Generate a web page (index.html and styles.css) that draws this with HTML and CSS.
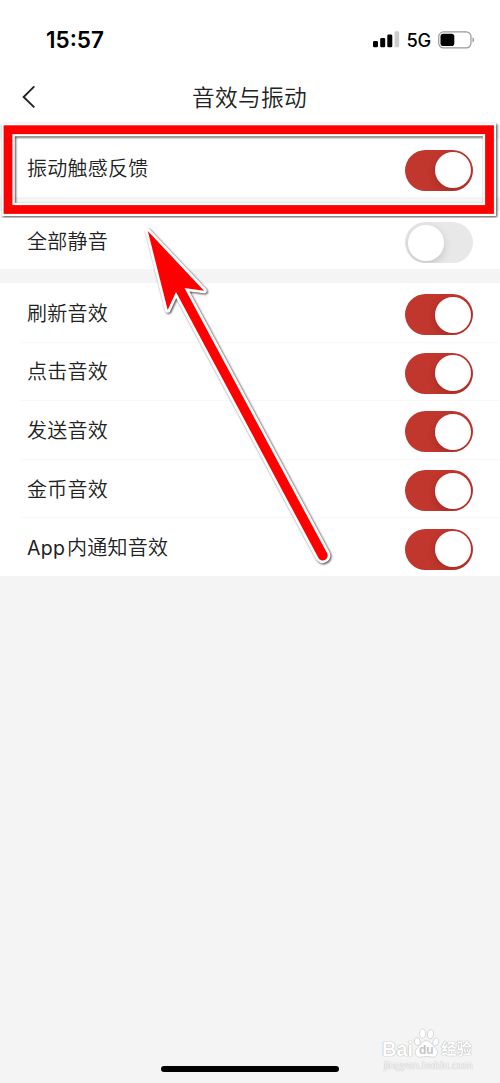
FILE: index.html
```html
<!DOCTYPE html>
<html lang="zh-CN">
<head>
<meta charset="utf-8">
<title>音效与振动</title>
<link rel="stylesheet" href="styles.css">
</head>
<body>
<div class="screen">
  <header class="top">
    <div class="status">
      <span class="clock">15:57</span>
      <div class="status-right">
        <svg class="signal" width="27" height="17" viewBox="0 0 27 17"><g fill="#000"><rect x="0" y="10" width="5" height="6.3" rx="1.4"/><rect x="7.2" y="7" width="5" height="9.3" rx="1.4"/><rect x="14.3" y="3.5" width="5" height="12.8" rx="1.4"/></g><rect x="21.6" y=".3" width="4.6" height="16" rx="1.4" fill="#ccc"/></svg>
        <span class="network">5G</span>
        <svg class="battery" width="37" height="18" viewBox="0 0 37 18"><rect x=".7" y=".9" width="32.3" height="16" rx="4.8" fill="#fff" stroke="#999" stroke-width="1.2"/><rect x="2.5" y="2.7" width="13.8" height="12.4" rx="2.8"/><path d="M34.5 6.3Q36.2 7 36.2 8.9T34.5 11.5Z" fill="#999"/></svg>
      </div>
    </div>
    <div class="navbar">
      <svg class="back" width="14" height="24" viewBox="0 0 14 24"><path d="M12.3 1.4L1.6 12L12.3 22.4" fill="none" stroke="#222" stroke-width="1.9"/></svg>
      <h1 class="title">音效与振动</h1>
    </div>
  </header>
  <section class="group">
    <div class="row"><span class="label">振动触感反馈</span><span class="switch on"></span></div>
  </section>
  <section class="group">
    <div class="row"><span class="label">全部静音</span><span class="switch"></span></div>
  </section>
  <section class="group">
    <div class="row"><span class="label">刷新音效</span><span class="switch on"></span></div>
    <div class="row"><span class="label">点击音效</span><span class="switch on"></span></div>
    <div class="row"><span class="label">发送音效</span><span class="switch on"></span></div>
    <div class="row"><span class="label">金币音效</span><span class="switch on"></span></div>
    <div class="row"><span class="label"><span class="latin">App</span>内通知音效</span><span class="switch on"></span></div>
  </section>

  <svg class="annotation" width="500" height="1083" viewBox="0 0 500 1083">
    <defs><filter id="shadow" x="-10%" y="-10%" width="120%" height="120%" color-interpolation-filters="sRGB"><feDropShadow dx="1" dy="1" stdDeviation="1.1" flood-color="#000" flood-opacity=".75"/></filter></defs>
    <g filter="url(#shadow)">
      <rect x="8.2" y="129.7" width="481.3" height="79.8" fill="none" stroke="#fff" stroke-width="13.2"/>
      <rect x="8" y="129.7" width="481.5" height="79.8" fill="none" stroke="#f00" stroke-width="8.8"/>
    </g>
    <path filter="url(#shadow)" d="M147.8 231L204 290.7L184.5 288L327 553A4.6 4.6 0 0 1 318.5 558L176 292L167.7 310Z" fill="#f00" stroke="#fff" stroke-width="5.4" stroke-linejoin="round" paint-order="stroke"/>
  </svg>

  <div class="watermark">
    <div class="brand">
      <span>Bai</span>
      <svg class="paw" width="27" height="31" viewBox="0 0 27 31"><g fill="#fff" stroke="#d4d4d4" stroke-width=".9"><ellipse cx="4.3" cy="13.5" rx="3" ry="4" transform="rotate(-15 4.3 13.5)"/><ellipse cx="9.6" cy="5.6" rx="3.1" ry="4.5"/><ellipse cx="17.5" cy="6.2" rx="3.1" ry="4.5" transform="rotate(12 17.5 6.2)"/><ellipse cx="22.7" cy="14" rx="3" ry="4" transform="rotate(15 22.7 14)"/><path d="M13.4 12.7C17.5 12.7 18.8 17 22 19.5C26.5 23.4 24.5 29.5 19.5 29.2C15.2 28.3 11.7 28.3 7.6 29.2C2.1 29.7.3 23.5 4.5 19.8C8 16.8 9.3 12.7 13.4 12.7Z"/></g><text class="du" x="13.3" y="25.7" text-anchor="middle">du</text></svg>
      <span class="cjk">经验</span>
    </div>
    <div class="site">jingyan.baidu.com</div>
  </div>
  <div class="home"></div>
</div>
</body>
</html>
```
FILE: styles.css
```css
* { box-sizing: border-box; }
body { margin: 0; }
.screen {
  position: relative;
  width: 500px;
  height: 1083px;
  overflow: hidden;
  background: #f4f4f4;
  color: #222;
  font-family: Roboto, "Noto Sans CJK SC", sans-serif;
}
.top { height: 125px; background: #fff; }
.status {
  height: 72px;
  padding: 7px 25px 0 46px;
  display: flex;
  align-items: center;
  justify-content: space-between;
  color: #000;
  font-family: Inter, sans-serif;
}
.clock { font-size: 22.5px; font-weight: 600; }
.status-right { display: flex; align-items: center; }
.network { margin: 0 7px 0 6.5px; font-size: 18.3px; font-weight: 500; letter-spacing: -0.2px; }
.signal, .battery { display: block; }
.navbar {
  height: 50px;
  padding-left: 22px;
  display: grid;
  grid-template-columns: 14px 1fr 37px;
  align-items: center;
}
.title {
  margin: 0;
  text-align: center;
  font-size: 22.7px;
  font-weight: 350;
  line-height: 34px;
  letter-spacing: .3px;
  font-family: "Noto Sans CJK SC", sans-serif;
}
.group { margin-top: 13.6px; background: #fff; }
.row {
  height: 58.6px;
  margin-left: 21px;
  padding: 5px 27px 0 6px;
  display: flex;
  align-items: center;
  justify-content: space-between;
}
.row + .row { padding-top: 4px; border-top: 1px solid #f8f8f8; }
.label {
  padding-bottom: 4px;
  font-size: 20px;
  font-weight: 350;
  line-height: 30px;
  letter-spacing: .25px;
  font-family: "Noto Sans CJK SC", sans-serif;
}
.latin { margin-right: 2px; font-family: Inter, sans-serif; font-size: 19.5px; font-weight: 400; }
.switch {
  display: flex;
  align-items: center;
  width: 68px;
  height: 41px;
  padding: 0 2.5px;
  overflow: hidden;
  border-radius: 21px;
  background: #e8e8e8;
}
.switch::before {
  content: "";
  width: 36px;
  height: 36px;
  border-radius: 50%;
  background: #fff;
  box-shadow: 0 3px 9px rgba(0, 0, 0, .16);
}
.switch.on { justify-content: flex-end; background: #c1362d; }
.annotation { position: absolute; left: 0; top: 0; }
.watermark {
  position: absolute;
  left: 382px;
  top: 1028px;
  color: #fff;
  font-family: "Liberation Sans", "Noto Sans CJK SC", sans-serif;
  text-shadow: 0 0 1px #aaa, 0 0 1px #aaa;
}
.brand { display: flex; align-items: flex-end; height: 31px; font-size: 20px; font-weight: 700; line-height: 20px; }
.cjk { margin-left: 1px; font-size: 15.3px; line-height: 21px; }
.paw { display: block; }
.du { fill: #c4c4c4; font: bold 12px "Liberation Sans", sans-serif; text-shadow: none; }
.site { padding-left: 2px; font-size: 11px; line-height: 13px; color: #fafafa; text-shadow: 0 0 1px #b4b4b4, 0 0 1px #ccc; }
.home {
  position: absolute;
  left: 161px;
  top: 1066px;
  width: 178px;
  height: 6px;
  border-radius: 3px;
  background: #000;
}
```
